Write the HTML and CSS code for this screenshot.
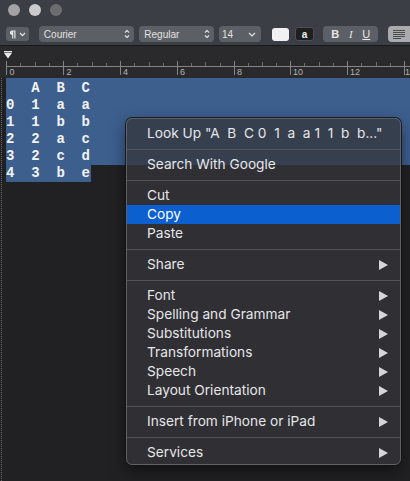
FILE: index.html
```html
<!DOCTYPE html>
<html>
<head>
<meta charset="utf-8">
<link rel="stylesheet" href="styles.css">
</head>
<body>
<div class="window">
  <header class="chrome">
    <div class="lights">
      <span class="light l1"></span><span class="light l2"></span><span class="light l3"></span>
    </div>
    <div class="toolbar">
      <div class="ctl para">
        <svg width="8" height="9" viewBox="0 0 8 9"><path d="M3.5 0.5H7.5V8.5H6.3V1.5H5.3V8.5H4.2V5A2.3 2.3 0 0 1 3.5 0.5Z" fill="#e4e4e4"/></svg>
        <svg width="7" height="5" viewBox="0 0 7 5"><path d="M1 1L3.5 3.6L6 1" fill="none" stroke="#e4e4e4" stroke-width="1.2"/></svg>
      </div>
      <div class="ctl popup font-pop"><span>Courier</span>
        <svg class="updown" width="6" height="10" viewBox="0 0 6 10"><path d="M1 3.5L3 1.5L5 3.5M1 6.5L3 8.5L5 6.5" fill="none" stroke="#e4e4e4" stroke-width="1.1"/></svg>
      </div>
      <div class="ctl popup style-pop"><span>Regular</span>
        <svg class="updown" width="6" height="10" viewBox="0 0 6 10"><path d="M1 3.5L3 1.5L5 3.5M1 6.5L3 8.5L5 6.5" fill="none" stroke="#e4e4e4" stroke-width="1.1"/></svg>
      </div>
      <div class="ctl popup size-pop"><span>14</span>
        <svg width="8" height="5" viewBox="0 0 8 5"><path d="M1 1L4 4L7 1" fill="none" stroke="#e4e4e4" stroke-width="1.2"/></svg>
      </div>
      <div class="well"></div>
      <div class="abox">a</div>
      <div class="ctl seg"><span class="b">B</span><span class="i">I</span><span class="u">U</span></div>
      <div class="ctl align">
        <svg width="20" height="11" viewBox="0 0 20 11"><path d="M4 1.5H16M4 3.5H16M4 5.5H16M4 7.5H16M4 9.5H12" stroke="#4a4c50" stroke-width="1"/></svg>
      </div>
    </div>
  </header>

  <div class="ruler">
    <svg width="410" height="32" viewBox="0 0 410 32">
      <rect x="4" y="5" width="8" height="1.4" fill="#e8e8e8"/>
      <path d="M4 7H12L8 12.5Z" fill="#e8e8e8"/>
      <line x1="6" y1="20.5" x2="410" y2="20.5" stroke="#858585" stroke-width="1"/>
      <g stroke="#858585" stroke-width="1">
        <line x1="6.5" y1="15" x2="6.5" y2="29"/>
        <line x1="63.5" y1="15" x2="63.5" y2="29"/>
        <line x1="120.5" y1="15" x2="120.5" y2="29"/>
        <line x1="177.5" y1="15" x2="177.5" y2="29"/>
        <line x1="234.5" y1="15" x2="234.5" y2="29"/>
        <line x1="290.5" y1="15" x2="290.5" y2="29"/>
        <line x1="347.5" y1="15" x2="347.5" y2="29"/>
        <line x1="404.5" y1="15" x2="404.5" y2="29"/>
      </g>
      <g stroke="#6e6e6e" stroke-width="1">
        <line x1="20.5" y1="17" x2="20.5" y2="20"/><line x1="35.5" y1="16" x2="35.5" y2="20"/><line x1="49.5" y1="17" x2="49.5" y2="20"/>
        <line x1="77.5" y1="17" x2="77.5" y2="20"/><line x1="92.5" y1="16" x2="92.5" y2="20"/><line x1="106.5" y1="17" x2="106.5" y2="20"/>
        <line x1="134.5" y1="17" x2="134.5" y2="20"/><line x1="149.5" y1="16" x2="149.5" y2="20"/><line x1="163.5" y1="17" x2="163.5" y2="20"/>
        <line x1="191.5" y1="17" x2="191.5" y2="20"/><line x1="205.5" y1="16" x2="205.5" y2="20"/><line x1="220.5" y1="17" x2="220.5" y2="20"/>
        <line x1="248.5" y1="17" x2="248.5" y2="20"/><line x1="262.5" y1="16" x2="262.5" y2="20"/><line x1="276.5" y1="17" x2="276.5" y2="20"/>
        <line x1="304.5" y1="17" x2="304.5" y2="20"/><line x1="319.5" y1="16" x2="319.5" y2="20"/><line x1="333.5" y1="17" x2="333.5" y2="20"/>
        <line x1="361.5" y1="17" x2="361.5" y2="20"/><line x1="376.5" y1="16" x2="376.5" y2="20"/><line x1="390.5" y1="17" x2="390.5" y2="20"/>
      </g>
      <g class="rnum" fill="#b4b4b4">
        <text x="9.5" y="28.5">0</text>
        <text x="66.5" y="28.5">2</text>
        <text x="123" y="28.5">4</text>
        <text x="180" y="28.5">6</text>
        <text x="237" y="28.5">8</text>
        <text x="293" y="28.5">10</text>
        <text x="350" y="28.5">12</text>
        <text x="405" y="28.5">1</text>
      </g>
    </svg>
  </div>

  <div class="doc">
    <div class="sel-block">
      <div class="row">   A  B  C</div>
      <div class="row">0  1  a  a</div>
      <div class="row">1  1  b  b</div>
      <div class="row">2  2  a  c</div>
      <div class="row">3  2  c  d</div>
    </div>
    <div class="row sel-last">4  3  b  e</div>
  </div>

  <div class="menu">
    <div class="item">Look Up "A  B  C 0  1  a  a 1  1  b  b..."</div>
    <div class="sep"></div>
    <div class="item">Search With Google</div>
    <div class="sep"></div>
    <div class="item">Cut</div>
    <div class="item active">Copy</div>
    <div class="item">Paste</div>
    <div class="sep"></div>
    <div class="item sub">Share</div>
    <div class="sep"></div>
    <div class="item sub">Font</div>
    <div class="item sub">Spelling and Grammar</div>
    <div class="item sub">Substitutions</div>
    <div class="item sub">Transformations</div>
    <div class="item sub">Speech</div>
    <div class="item sub">Layout Orientation</div>
    <div class="sep"></div>
    <div class="item sub">Insert from iPhone or iPad</div>
    <div class="sep"></div>
    <div class="item sub">Services</div>
  </div>
</div>
</body>
</html>
```

FILE: styles.css
```css
* { box-sizing: border-box; }
html, body {
  margin: 0;
  padding: 0;
  width: 410px;
  height: 481px;
  overflow: hidden;
  background: #222224;
  font-family: "Liberation Sans", Arial, sans-serif;
}
.window {
  position: relative;
  width: 410px;
  height: 481px;
  display: flex;
  flex-direction: column;
}
.chrome {
  height: 46px;
  background: #3b3e45;
  border-bottom: 1px solid #17181a;
  padding-top: 4px;
}
.lights {
  display: flex;
  gap: 9px;
  padding-left: 8px;
  height: 12px;
}
.light {
  width: 12px;
  height: 12px;
  border-radius: 50%;
}
.l1 { background: #a3a3a5; }
.l2 { background: #cacacc; }
.l3 { background: #6c6d70; }

.toolbar {
  display: flex;
  align-items: center;
  margin-top: 10px;
  padding-left: 6px;
  height: 16px;
}
.ctl {
  background: #5c5f65;
  border-radius: 4px;
  height: 16px;
  display: flex;
  align-items: center;
  color: #e2e2e2;
  font-size: 10px;
}
.para {
  width: 23px;
  height: 14px;
  border-radius: 3px;
  justify-content: center;
  gap: 3px;
}
.popup {
  justify-content: space-between;
  padding: 0 4px 0 5px;
}
.font-pop { width: 96px; margin-left: 10px; }
.style-pop { width: 75px; margin-left: 5px; }
.size-pop { width: 42px; margin-left: 5px; padding-right: 5px; padding-left: 3px; }
.well {
  width: 17px;
  height: 13px;
  margin-left: 11px;
  background: #f1f1f3;
  border-radius: 3px;
}
.abox {
  width: 20px;
  height: 14px;
  margin-left: 6px;
  background: #1f1f21;
  border: 1px solid #4d4f53;
  border-radius: 3px;
  color: #f0f0f0;
  font-size: 10px;
  font-weight: bold;
  display: flex;
  align-items: center;
  justify-content: center;
}
.seg {
  width: 55px;
  margin-left: 9px;
  justify-content: space-around;
  padding: 0 3px;
  font-size: 11px;
  color: #e6e6e6;
}
.seg .b { font-weight: bold; }
.seg .i { font-style: italic; font-family: "Liberation Serif", serif; }
.seg .u { text-decoration: underline; }
.align {
  width: 22px;
  margin-left: 10px;
  background: #a9abaf;
  border-radius: 4px 0 0 4px;
  justify-content: center;
}

.ruler {
  height: 32px;
  background: #2a2a2c;
}
.ruler svg { display: block; }
.rnum text {
  font-family: "Liberation Sans", Arial, sans-serif;
  font-size: 9px;
}

.doc {
  flex: 1;
  margin-left: 1px;
  border-left: 1px dotted #6a6a6c;
  padding-left: 4px;
  background: #212123;
  font-family: "Liberation Mono", "Courier New", monospace;
  font-size: 14px;
  font-weight: bold;
  color: #f2f2f2;
}
.row {
  height: 17px;
  line-height: 17px;
  white-space: pre;
}
.sel-block {
  background: #3d5f8e;
  padding-top: 2px;
}
.sel-last {
  background: #3d5f8e;
  width: 85px;
}

.menu {
  position: absolute;
  left: 126px;
  top: 118px;
  width: 275px;
  height: 347px;
  background: rgba(52, 53, 58, 0.76);
  border: 1px solid #5e6064;
  border-radius: 6px;
  box-shadow: 0 0 0 1px rgba(20,20,22,0.9), 0 6px 16px rgba(0,0,0,0.5);
  padding-top: 5px;
  font-family: Inter, "Liberation Sans", sans-serif;
  font-size: 13.7px;
  color: #e6e6e8;
  overflow: hidden;
}
.item {
  height: 19px;
  line-height: 19px;
  padding-left: 20px;
  padding-right: 12px;
  white-space: pre;
  display: flex;
  justify-content: space-between;
  align-items: center;
}
.item.active {
  background: #0c5fcf;
  color: #ffffff;
}
.item.sub::after {
  content: "";
  width: 0;
  height: 0;
  border-left: 9px solid #d6d6d8;
  border-top: 5px solid transparent;
  border-bottom: 5px solid transparent;
}
.sep {
  height: 12px;
  display: flex;
  align-items: center;
}
.sep::before {
  content: "";
  flex: 1;
  height: 1px;
  background: #52545a;
}
```
